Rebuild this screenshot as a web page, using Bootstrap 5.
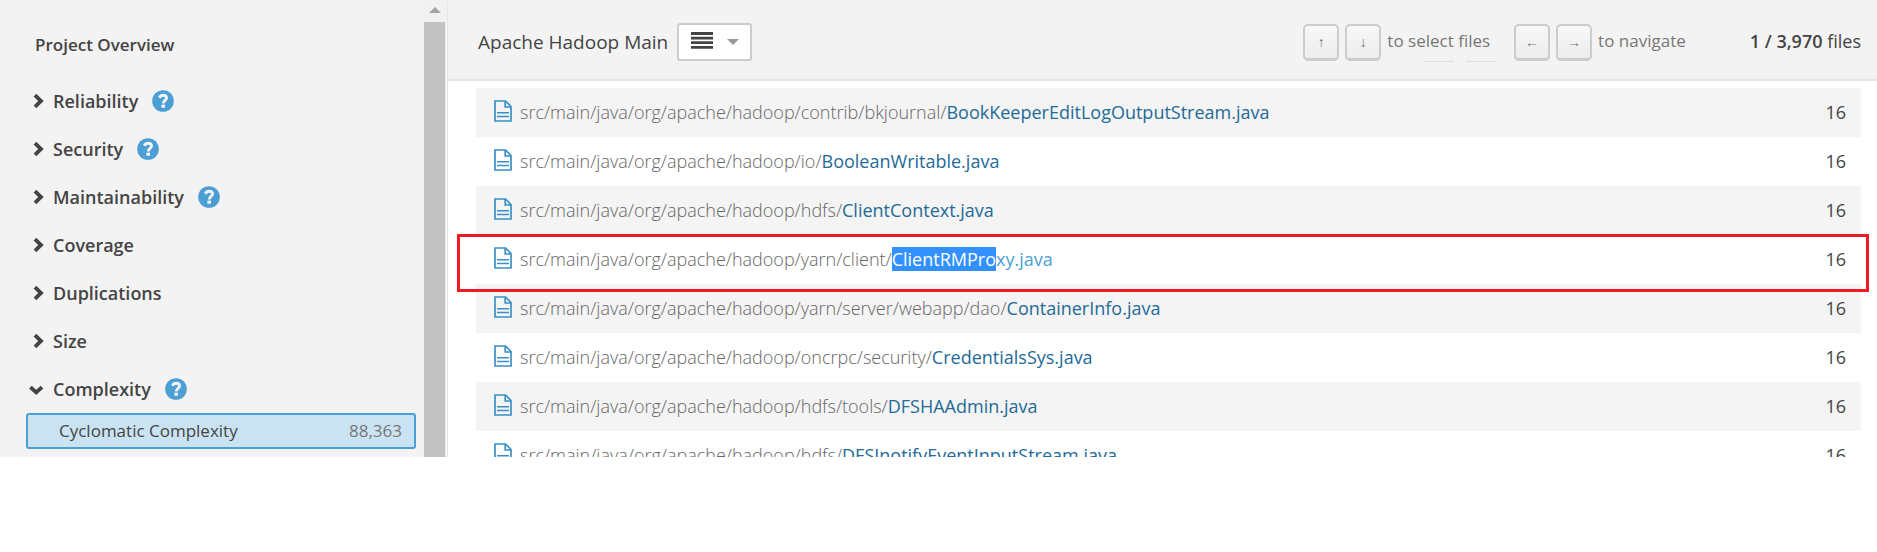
<!doctype html>
<html lang="en">
<head>
<meta charset="utf-8">
<meta name="viewport" content="width=device-width, initial-scale=1">
<title>Apache Hadoop Main - Measures</title>
<link href="https://cdn.jsdelivr.net/npm/bootstrap@5.3.0/dist/css/bootstrap.min.css" rel="stylesheet">
<style>
body { font-family: "Open Sans", "Noto Sans", sans-serif; font-size: 18px; line-height: 24px; color: #444; background: #fff; }
a { text-decoration: none; }
.side { flex: 0 0 448px; background: #f3f3f3; border-right: 1px solid #e6e6e6; }
.side-body { padding: 33px 7px 8px 26px; }
.overview { color: #444; font-size: 17px; font-weight: 600; padding: 0 9px; margin-bottom: 20px; }
.domain { height: 48px; }
.domain-toggle { background: none; border: 0; padding: 0; color: #444; font-weight: 600; }
.domain-toggle svg { width: 27px; height: 18px; }
.help { margin-left: 14px; line-height: 0; }
.measure { height: 36px; padding: 0 12px 0 31px; font-size: 17px; color: #444; background: #cae3f2; border: 2px solid #4b9fd5; border-radius: 3px; }
.measure-value { color: #777; }
.track { flex: 0 0 24px; background: #f1f1f1; padding: 7px 2px 0 1px; }
.thumb { background: #c1c1c1; margin-top: 9px; }
.topbar { background: #f3f3f3; border-bottom: 2px solid #e6e6e6; padding: 23px 16px 18px 30px; }
.proj { font-size: 19px; }
.view-btn { width: 75px; height: 38px; margin-left: 9px; background: #fff; border: 2px solid #ccc; border-radius: 3px; padding: 0 11px 0 12px; }
.hint { font-size: 17px; color: #777; }
.hint > span, .total { margin-bottom: 2px; }
kbd.cap { width: 36px; height: 37px; padding: 0; margin-right: 6px; border: 2px solid #ccc; border-bottom-width: 3px; border-radius: 5px; background: linear-gradient(#f8f8f8, #ececec); color: #777; font: 14px "Liberation Sans", sans-serif; }
.ghost { position: absolute; top: 37px; height: 1px; width: 30px; background: #ddd; }
.ghost-a { left: 121px; }
.ghost-b { left: 163px; }
.total { margin-left: 64px; }
.files { flex: 1 1 0px; min-height: 0; overflow: hidden; padding: 7px 16px 0 28px; }
.files tr { height: 49px; position: relative; }
.files tr:nth-child(odd) { background: #f4f4f4; }
.files td { padding: 0 15px 1px 18px; }
.files a { color: #236a97; }
.path { font-weight: 300; color: #666; }
.file-icon { margin-right: 8px; vertical-align: -3px; }
.files a.active { color: #4b9fd5; }
.picked { background: #3390ff; color: #fff; }
.frame { position: absolute; inset: -1px -8px -8px -19px; border: 3px solid #ed1c24; z-index: 1; pointer-events: none; }
</style>
</head>
<body>
<svg class="d-none" aria-hidden="true">
  <symbol id="i-right" viewBox="0 0 28 18"><path d="M9.3 3l6.2 6-6.2 6" fill="none" stroke="#444" stroke-width="4"/></symbol>
  <symbol id="i-down" viewBox="0 0 28 18"><path d="M4.6 7l6 5.6 6-5.6" fill="none" stroke="#444" stroke-width="4"/></symbol>
  <symbol id="i-help" viewBox="0 0 22 22"><circle cx="11" cy="11" r="10.8" fill="#4b9fd5"/><path d="M7.3 7.7C8.2 6.1 9.4 5.3 11.1 5.3c2 0 3.4 1.1 3.4 2.7 0 2.3-3.2 2.5-3.2 5.4" fill="none" stroke="#f3f3f3" stroke-width="2.9"/><rect x="9.4" y="14.6" width="3.6" height="3.2" fill="#f3f3f3"/></symbol>
  <symbol id="i-file" viewBox="0 0 18 22"><path d="M1 1h10.5L17 6.5V21H1z M11.2 1v6H17" fill="none" stroke="#3a90c6" stroke-width="1.7"/><path d="M3 12.8h12M3 16.4h12" stroke="#3a90c6" stroke-width="1.5"/></symbol>
</svg>

<div class="d-flex">
  <aside class="side d-flex">
    <nav class="side-body flex-grow-1">
      <a href="#" class="overview d-block">Project Overview</a>
      <div class="domain d-flex align-items-center"><button type="button" class="domain-toggle d-flex align-items-center"><svg><use href="#i-right"/></svg>Reliability</button><a href="#" class="help" aria-label="Help"><svg width="22" height="22"><use href="#i-help"/></svg></a></div>
      <div class="domain d-flex align-items-center"><button type="button" class="domain-toggle d-flex align-items-center"><svg><use href="#i-right"/></svg>Security</button><a href="#" class="help" aria-label="Help"><svg width="22" height="22"><use href="#i-help"/></svg></a></div>
      <div class="domain d-flex align-items-center"><button type="button" class="domain-toggle d-flex align-items-center"><svg><use href="#i-right"/></svg>Maintainability</button><a href="#" class="help" aria-label="Help"><svg width="22" height="22"><use href="#i-help"/></svg></a></div>
      <div class="domain d-flex align-items-center"><button type="button" class="domain-toggle d-flex align-items-center"><svg><use href="#i-right"/></svg>Coverage</button></div>
      <div class="domain d-flex align-items-center"><button type="button" class="domain-toggle d-flex align-items-center"><svg><use href="#i-right"/></svg>Duplications</button></div>
      <div class="domain d-flex align-items-center"><button type="button" class="domain-toggle d-flex align-items-center"><svg><use href="#i-right"/></svg>Size</button></div>
      <div class="domain d-flex align-items-center"><button type="button" class="domain-toggle d-flex align-items-center"><svg><use href="#i-down"/></svg>Complexity</button><a href="#" class="help" aria-label="Help"><svg width="22" height="22"><use href="#i-help"/></svg></a></div>
      <a href="#" class="measure d-flex align-items-center justify-content-between"><span>Cyclomatic Complexity</span><span class="measure-value">88,363</span></a>
    </nav>
    <div class="track d-flex flex-column" aria-hidden="true">
      <svg class="mx-auto" width="12" height="6"><path d="M0 6L6 0l6 6z" fill="#a3a3a3"/></svg>
      <div class="thumb flex-grow-1"></div>
    </div>
  </aside>

  <main class="d-flex flex-column flex-grow-1">
    <header class="topbar d-flex align-items-center">
      <span class="proj">Apache Hadoop Main</span>
      <button type="button" class="view-btn d-flex align-items-center justify-content-between" aria-label="View as list">
        <svg width="22" height="22"><path d="M0 2.5h22M0 7.1h22M0 11.7h22M0 16.3h22" stroke="#444" stroke-width="2.8"/></svg>
        <svg width="12" height="6"><path d="M0 0h12L6 6z" fill="#999"/></svg>
      </button>
      <div class="hint position-relative d-flex align-items-center ms-auto">
        <kbd class="cap d-flex align-items-center justify-content-center">↑</kbd>
        <kbd class="cap d-flex align-items-center justify-content-center">↓</kbd>
        <span>to select files</span>
        <span class="ghost ghost-a"></span><span class="ghost ghost-b"></span>
      </div>
      <div class="hint d-flex align-items-center ms-4">
        <kbd class="cap d-flex align-items-center justify-content-center">←</kbd>
        <kbd class="cap d-flex align-items-center justify-content-center">→</kbd>
        <span>to navigate</span>
      </div>
      <div class="total"><span class="fw-semibold">1 / 3,970</span> files</div>
    </header>
    <section class="files">
      <table class="w-100">
        <tbody>
          <tr><td><svg class="file-icon" width="18" height="22"><use href="#i-file"/></svg><a href="#"><span class="path">src/main/java/org/apache/hadoop/contrib/bkjournal/</span>BookKeeperEditLogOutputStream.java</a></td><td class="text-end">16</td></tr>
          <tr><td><svg class="file-icon" width="18" height="22"><use href="#i-file"/></svg><a href="#"><span class="path">src/main/java/org/apache/hadoop/io/</span>BooleanWritable.java</a></td><td class="text-end">16</td></tr>
          <tr><td><svg class="file-icon" width="18" height="22"><use href="#i-file"/></svg><a href="#"><span class="path">src/main/java/org/apache/hadoop/hdfs/</span>ClientContext.java</a></td><td class="text-end">16</td></tr>
          <tr><td><svg class="file-icon" width="18" height="22"><use href="#i-file"/></svg><a href="#" class="active"><span class="path">src/main/java/org/apache/hadoop/yarn/client/</span><span class="picked">ClientRMPro</span>xy.java</a><span class="frame"></span></td><td class="text-end">16</td></tr>
          <tr><td><svg class="file-icon" width="18" height="22"><use href="#i-file"/></svg><a href="#"><span class="path">src/main/java/org/apache/hadoop/yarn/server/webapp/dao/</span>ContainerInfo.java</a></td><td class="text-end">16</td></tr>
          <tr><td><svg class="file-icon" width="18" height="22"><use href="#i-file"/></svg><a href="#"><span class="path">src/main/java/org/apache/hadoop/oncrpc/security/</span>CredentialsSys.java</a></td><td class="text-end">16</td></tr>
          <tr><td><svg class="file-icon" width="18" height="22"><use href="#i-file"/></svg><a href="#"><span class="path">src/main/java/org/apache/hadoop/hdfs/tools/</span>DFSHAAdmin.java</a></td><td class="text-end">16</td></tr>
          <tr><td><svg class="file-icon" width="18" height="22"><use href="#i-file"/></svg><a href="#"><span class="path">src/main/java/org/apache/hadoop/hdfs/</span>DFSInotifyEventInputStream.java</a></td><td class="text-end">16</td></tr>
        </tbody>
      </table>
    </section>
  </main>
</div>
<script src="https://cdn.jsdelivr.net/npm/bootstrap@5.3.0/dist/js/bootstrap.bundle.min.js"></script>
</body>
</html>
